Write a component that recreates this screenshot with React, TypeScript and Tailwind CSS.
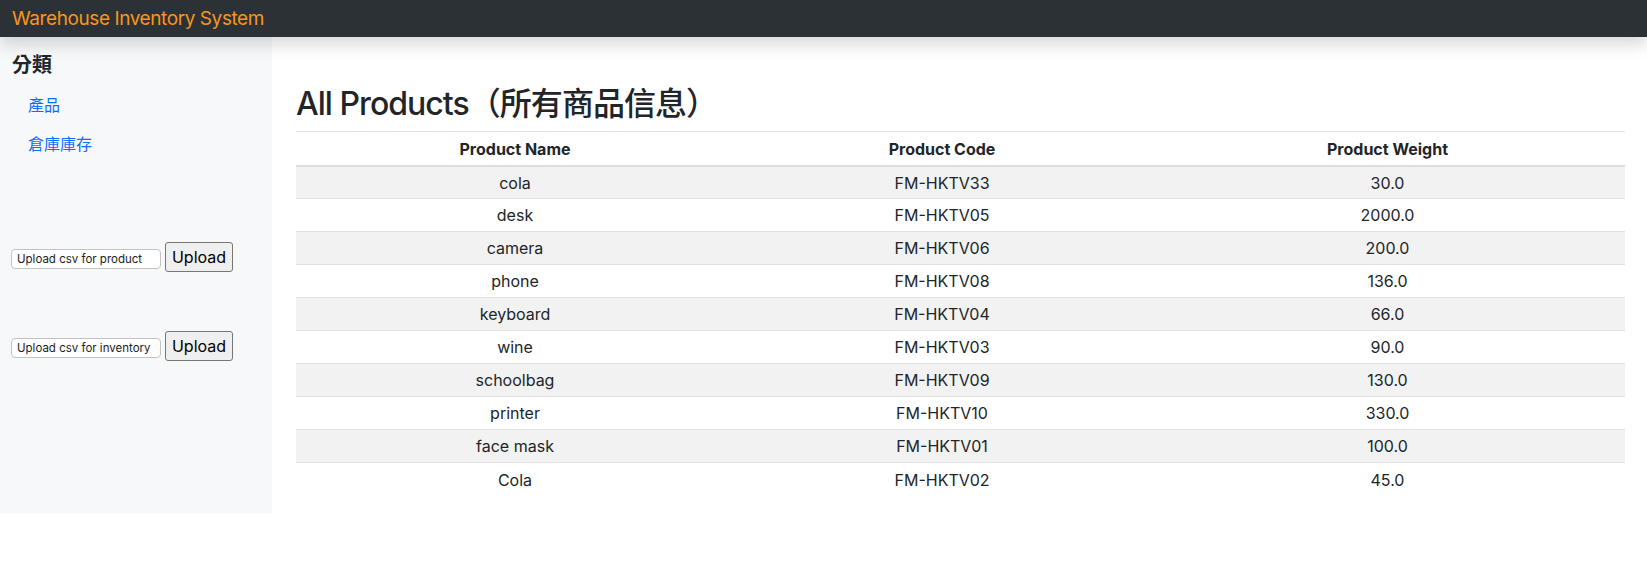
import React from 'react';

const products = [
  { name: 'cola', code: 'FM-HKTV33', weight: '30.0' },
  { name: 'desk', code: 'FM-HKTV05', weight: '2000.0' },
  { name: 'camera', code: 'FM-HKTV06', weight: '200.0' },
  { name: 'phone', code: 'FM-HKTV08', weight: '136.0' },
  { name: 'keyboard', code: 'FM-HKTV04', weight: '66.0' },
  { name: 'wine', code: 'FM-HKTV03', weight: '90.0' },
  { name: 'schoolbag', code: 'FM-HKTV09', weight: '130.0' },
  { name: 'printer', code: 'FM-HKTV10', weight: '330.0' },
  { name: 'face mask', code: 'FM-HKTV01', weight: '100.0' },
  { name: 'Cola', code: 'FM-HKTV02', weight: '45.0' },
];

function UploadForm({ label, className }: { label: string; className?: string }) {
  return (
    <form className={`flex items-center gap-1 ${className ?? ''}`} onSubmit={(e) => e.preventDefault()}>
      <input
        type="text"
        placeholder={label}
        className="mt-1 h-5 w-[150px] rounded-[4px] border border-[#c3c3c3] bg-white px-[5px] text-[11.5px] text-[#222] placeholder:text-[#222] outline-none"
      />
      <button
        type="submit"
        className="h-[30px] w-[68px] rounded-[3px] border border-[#767676] bg-[#efefef] text-[16px] text-black"
      >
        Upload
      </button>
    </form>
  );
}

export default function App() {
  return (
    <div className="min-h-[564px] bg-white font-['Inter','Noto_Sans_CJK_TC',sans-serif] text-[#212529]">
      <nav className="relative z-10 flex h-[37px] items-center bg-[#2c3136] pl-3 shadow-[0_8px_16px_rgba(0,0,0,0.15)]">
        <span className="text-[19px] leading-none tracking-[-0.022em] text-[#f7961e]">Warehouse Inventory System</span>
      </nav>

      <div className="flex">
        <aside className="w-[272px] shrink-0 bg-[#f7f8fa] pt-4">
          <h5 className="mb-2 pl-3 text-[20px] font-semibold leading-6">分類</h5>
          <ul>
            <li>
              <a href="#" className="block py-[7.5px] pl-7 leading-6 text-[#0d6efd]">產品</a>
            </li>
            <li>
              <a href="#" className="block py-[7.5px] pl-7 leading-6 text-[#0d6efd]">倉庫庫存</a>
            </li>
          </ul>
          <div className="pl-[11px]">
            <UploadForm label="Upload csv for product" className="mt-[79px]" />
            <UploadForm label="Upload csv for inventory" className="mt-[59px]" />
          </div>
        </aside>

        <main className="flex-1 pb-[17px] pl-6 pr-[22px] pt-12">
          <h2 className="mb-2 text-[32px] font-medium leading-[1.2] tracking-[-0.03em]">All Products（所有商品信息）</h2>
          <table className="w-full border-collapse border-t border-[#dee2e6] text-center text-[16px]">
            <thead>
              <tr className="border-b-2 border-[#d9dde1]">
                <th className="h-[34px] w-[438px] font-bold">Product Name</th>
                <th className="h-[34px] w-[416px] font-bold">Product Code</th>
                <th className="h-[34px] font-bold">Product Weight</th>
              </tr>
            </thead>
            <tbody>
              {products.map((p, i) => (
                <tr
                  key={p.code}
                  className={`${i % 2 === 0 ? 'bg-[#f2f2f2]' : 'bg-white'} ${i < products.length - 1 ? 'border-b border-[#dee2e6]' : ''}`}
                >
                  <td className="h-[33px]">{p.name}</td>
                  <td className="h-[33px]">{p.code}</td>
                  <td className="h-[33px]">{p.weight}</td>
                </tr>
              ))}
            </tbody>
          </table>
        </main>
      </div>
    </div>
  );
}
